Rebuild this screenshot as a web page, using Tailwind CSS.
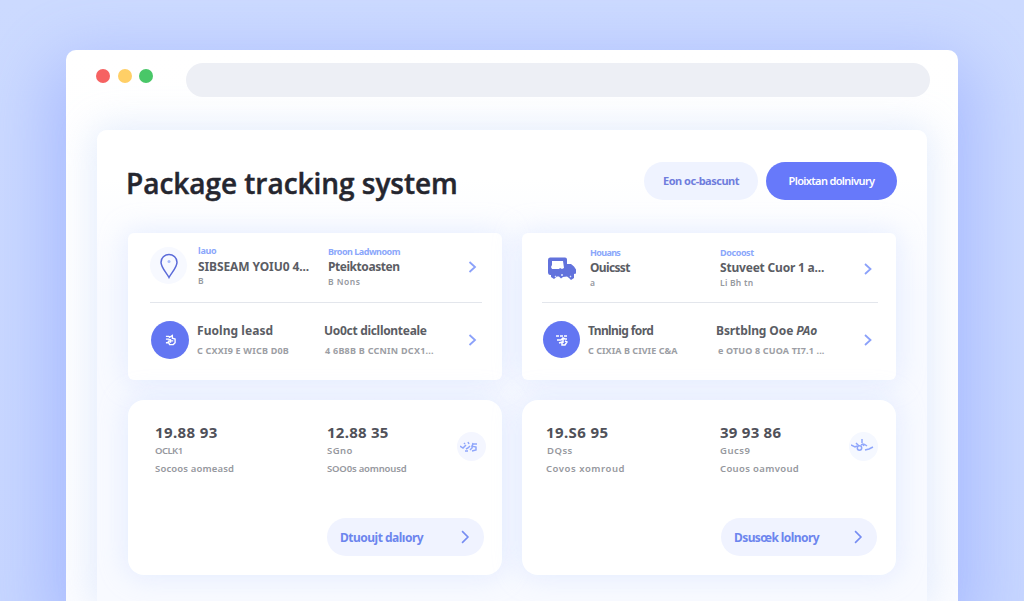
<!DOCTYPE html>
<html lang="en">
<head>
<meta charset="utf-8">
<title>Package tracking system</title>
<script src="https://cdn.jsdelivr.net/npm/@tailwindcss/browser@4"></script>
</head>
<body class="h-[601px] overflow-hidden bg-[#cbdaff] bg-linear-to-b from-[#cddbff] to-[#c8d7ff] px-[66px] pt-[50px] font-['Noto_Sans',sans-serif] whitespace-nowrap text-[#5b5d64]">
<main class="h-[551px] w-[892px] rounded-t-[10px] bg-linear-to-b from-white to-[#fbfcff] shadow-[0_24px_70px_16px_rgba(135,158,255,0.5)]">
  <header class="flex h-20 pt-[13px] pl-[30px]">
    <div class="flex h-[26px] w-[90px] items-center gap-[7.5px]">
      <span class="size-[14px] rounded-full bg-[#f66262]"></span>
      <span class="size-[14px] rounded-full bg-[#ffcf66]"></span>
      <span class="size-[14px] rounded-full bg-[#49c768]"></span>
    </div>
    <div class="h-[34px] w-[744px] rounded-full bg-[#edeff5]"></div>
  </header>
  <section class="ml-[31px] h-[471px] w-[830px] rounded-t-[10px] bg-linear-to-b from-white from-10% to-[#f8faff] to-35% pt-8 shadow-[0_0_36px_4px_rgba(190,212,248,0.42)]">
    <div class="flex h-[38px] items-center pl-[29px]">
      <h1 class="w-[518px] pt-[3px] font-['Open_Sans',sans-serif] text-[28px] leading-[38px] font-semibold tracking-[-0.03px] text-[#25262f] [-webkit-text-stroke:0.45px_#25262f]">Package tracking system</h1>
      <button class="h-[38px] w-[114px] rounded-full bg-[#eff3ff] text-[11px] font-bold tracking-[-0.5px] text-[#6f7ddd]">Eon oc-bascunt</button>
      <button class="ml-2 h-[38px] w-[131px] rounded-full bg-[#6779fa] text-[11px] font-semibold tracking-[-0.65px] text-white">Ploixtan dolnivury</button>
    </div>

    <div class="mt-[33px] ml-[31px] grid grid-cols-[374px_374px] gap-x-5 gap-y-5">
      <article class="h-[147px] rounded-md bg-white shadow-[0_0_26px_3px_rgba(200,216,255,0.38)]">
        <div class="ml-[22px] grid h-[70px] w-[332px] grid-cols-[48px_130px_1fr_20px] border-b-[1.5px] border-[#e3e6ec]">
          <span class="mt-[14px] flex size-[37px] items-center justify-center rounded-full bg-[#f7f9ff]">
            <svg class="h-[26px] w-5" viewBox="0 0 20 26" fill="none" stroke="#5b6bd9" stroke-width="1.500"><path d="M10 24.5C7.5 19.5 2 14.5 2 9.2a8 7.6 0 0 1 16 0c0 5.300-5.500 10.300-8 15.300Z"/><circle cx="10" cy="8.500" r="1.500" fill="#a9bcfb" stroke="none"/></svg>
          </span>
          <div class="pt-[10px]">
            <p class="text-[9px] leading-[15px] font-bold tracking-[-0.3px] text-[#8ba7fb]">lauo</p>
            <p class="pt-px text-[12px] leading-[15px] font-bold tracking-[-0.1px]">SIBSEAM YOIU0 4...</p>
            <p class="text-[8.500px] leading-[14px] font-semibold text-[#96999f]">B</p>
          </div>
          <div class="pt-[11px]">
            <p class="text-[9px] leading-[15px] font-bold tracking-[-0.5px] text-[#8ba7fb]">Broon Ladwnoom</p>
            <p class="text-[12px] leading-[15px] font-bold tracking-[-0.45px]">Pteiktoasten</p>
            <p class="text-[8.500px] leading-[15px] font-semibold tracking-[0.500px] text-[#96999f]">B Nons</p>
          </div>
          <svg class="mt-7 ml-1 size-3" viewBox="0 0 12 12" fill="none" stroke="#8ba1fa" stroke-width="1.800"><path d="m3.500 1 5.500 5-5.500 5"/></svg>
        </div>
        <div class="ml-[22px] grid h-[77px] w-[332px] grid-cols-[47px_127px_1fr_20px]">
          <span class="mt-[18px] ml-px flex size-[38px] items-center justify-center rounded-full bg-[#6376f2]">
            <svg class="h-3 w-[11px]" viewBox="0 0 12 12" fill="none" stroke="#fff" stroke-width="1.500"><path d="M1 2h3l1 1 3-2v3l3 1v4L9 11H5l-1-2H1M1 5h3l2 2h3M6 5v4M3 7l2 1"/></svg>
          </span>
          <div class="pt-[18px]">
            <p class="text-[12px] leading-5 font-bold tracking-[0.05px]">Fuolng leasd</p>
            <p class="text-[9px] leading-[20px] font-bold tracking-[0.2px] text-[#9c9ea4]">C CXXI9 E WICB D0B</p>
          </div>
          <div class="pt-[18px]">
            <p class="text-[12px] leading-5 font-bold tracking-[-0.3px]">Uo0ct dicllonteale</p>
            <p class="pl-px text-[9px] leading-[20px] font-bold tracking-[0.25px] text-[#9c9ea4]">4 6B8B B CCNIN DCX1...</p>
          </div>
          <svg class="mt-[31px] ml-1 size-3" viewBox="0 0 12 12" fill="none" stroke="#8ba1fa" stroke-width="1.800"><path d="m3.500 1 5.500 5-5.500 5"/></svg>
        </div>
      </article>

      <article class="h-[147px] rounded-md bg-white shadow-[0_0_26px_3px_rgba(200,216,255,0.38)]">
        <div class="ml-5 grid h-[70px] w-[336px] grid-cols-[48px_130px_1fr_20px] border-b-[1.5px] border-[#e3e6ec]">
          <svg class="mt-6 ml-[5px] h-6 w-[30px]" viewBox="0 0 30 24"><path d="M3 .5h15a2 2 0 0 1 2 2V7h4l3 2.500 2 3v4l-2 .5v4l-3 2-2-2-2-1.500-4 .5-2 1.500-2-2h-2l-3 2.500-3-2v-2H3a2.500 2.500 0 0 1-2-2.500V3A2.500 2.500 0 0 1 3 .5Z" fill="#6272dc"/><path d="M5 4h11l1 7-2 1-2-1-1 1H5l-1-2 1-2Z" fill="#fff"/><path d="m8 19 1 1m14-1 1 1M14 18l2 0" stroke="#dce4ff" stroke-width="1.300"/></svg>
          <div class="pt-[12px]">
            <p class="text-[9px] leading-[15px] font-bold tracking-[-0.65px] text-[#8ba7fb]">Houans</p>
            <p class="text-[12px] leading-[15px] font-bold tracking-[-0.650px]">Ouicsst</p>
            <p class="text-[8.500px] leading-[15px] font-semibold text-[#96999f]">a</p>
          </div>
          <div class="pt-[12px]">
            <p class="text-[9px] leading-[15px] font-bold tracking-[-0.4px] text-[#8ba7fb]">Docoost</p>
            <p class="text-[12px] leading-[15px] font-bold tracking-[-0.2px]">Stuveet Cuor 1 a...</p>
            <p class="text-[8.500px] leading-[15px] font-semibold tracking-[0.250px] text-[#96999f]">Li Bh tn</p>
          </div>
          <svg class="mt-[30px] ml-1 size-3" viewBox="0 0 12 12" fill="none" stroke="#8ba1fa" stroke-width="1.800"><path d="m3 1 5.500 5-5.500 5"/></svg>
        </div>
        <div class="ml-5 grid h-[77px] w-[336px] grid-cols-[46px_128px_1fr_20px]">
          <span class="mt-[18px] ml-px flex size-[37px] items-center justify-center rounded-full bg-[#6376f2]">
            <svg class="h-3 w-[12px]" viewBox="0 0 12 12" fill="none" stroke="#fff" stroke-width="1.500"><path d="M0 2h3m1 0h3m1 0h3M1 6h4l2-2 2 1h2M3 9l3-1v3h3l2-3-2-1M7 4v5"/></svg>
          </span>
          <div class="pt-[18px]">
            <p class="text-[12px] leading-5 font-bold tracking-[-0.6px]">Tnnlnig ford</p>
            <p class="text-[9px] leading-[20px] font-bold tracking-[0.050px] text-[#9c9ea4]">C CIXIA B CIVIE C&amp;A</p>
          </div>
          <div class="pt-[18px]">
            <p class="text-[12px] leading-5 font-bold tracking-[-0.1px]">Bsrtblng Ooe <i>PAo</i></p>
            <p class="pl-[2px] text-[9px] leading-[20px] font-bold tracking-[0.150px] text-[#9c9ea4]">e OTUO 8 CUOA TI7.1 ...</p>
          </div>
          <svg class="mt-[31px] ml-1 size-3" viewBox="0 0 12 12" fill="none" stroke="#8ba1fa" stroke-width="1.800"><path d="m3 1 5.500 5-5.500 5"/></svg>
        </div>
      </article>

      <article class="h-[175px] rounded-2xl bg-white pt-[23px] shadow-[0_0_26px_3px_rgba(200,216,255,0.38)]">
        <div class="ml-[27px] grid h-[95px] grid-cols-[172px_130px_29px]">
          <div class="text-[9.500px] leading-[18px] font-semibold text-[#96989e]">
            <p class="mb-px text-[15px] font-bold tracking-[0.4px] text-[#505159]">19.88 93</p><p class="tracking-[-0.55px]">OCLK1</p><p class="tracking-[0.150px]">Socoos aomeasd</p>
          </div>
          <div class="text-[9.500px] leading-[18px] font-semibold text-[#96989e]">
            <p class="mb-px text-[15px] font-bold tracking-[0.250px] text-[#505159]">12.88 35</p><p class="tracking-[0.4px]">SGno</p><p class="tracking-[-0.180px]">SOO0s aomnousd</p>
          </div>
          <span class="mt-[9px] flex size-[29px] items-center justify-center rounded-full bg-[#f4f6ff]">
            <svg class="mr-[5px] h-[14px] w-[18px] shrink-0" viewBox="0 0 18 14" fill="none" stroke="#8fa6fb" stroke-width="1.500"><path d="m0 6 3 2 3-3M6 9l2-1 2-2M8 2l1 2M5 11l3 0M17 4h-4l-1 2 4 1v3l-4 1M10 10l2-2 1-5M4 3l1 1"/></svg>
          </span>
        </div>
        <button class="mr-[18px] ml-auto flex h-[38px] w-[157px] items-center justify-between rounded-full bg-[#f0f3ff] px-[13px] text-[12px] font-bold tracking-[-0.5px] text-[#6c85ee]"><span class="pt-px">Dtuoujt dalıory</span>
          <svg class="-mr-px size-[14px]" viewBox="0 0 12 12" fill="none" stroke="#768cf2" stroke-width="1.400"><path d="m3.500 1 5 5-5 5"/></svg></button>
      </article>

      <article class="h-[175px] rounded-2xl bg-white pt-[23px] shadow-[0_0_26px_3px_rgba(200,216,255,0.38)]">
        <div class="ml-6 grid h-[95px] grid-cols-[174px_129px_29px]">
          <div class="text-[9.500px] leading-[18px] font-semibold text-[#96989e]">
            <p class="mb-px text-[15px] font-bold tracking-[0.4px] text-[#505159]">19.S6 95</p><p class="pl-px tracking-[0.5px]">DQss</p><p class="tracking-[0.550px]">Covos xomroud</p>
          </div>
          <div class="text-[9.500px] leading-[18px] font-semibold text-[#96989e]">
            <p class="mb-px text-[15px] font-bold tracking-[0.250px] text-[#505159]">39 93 86</p><p class="tracking-[0.5px]">Gucs9</p><p class="tracking-[0.350px]">Couos oamvoud</p>
          </div>
          <span class="mt-[9px] flex size-[29px] items-center justify-center rounded-full bg-[#f5f8ff]">
            <svg class="mr-[3px] mb-[3px] h-[14px] w-[23px] shrink-0" viewBox="0 0 23 14" fill="none" stroke="#8fa6fb" stroke-width="1.500"><path d="m0 7 4 2 2-1M5 5l3 3M11 1v4M13 6l3 2M14 12l4-1 4-2"/><circle cx="8.500" cy="10" r="2.200"/><path d="m10 7 2-1 1 2"/></svg>
          </span>
        </div>
        <button class="mr-[19px] ml-auto flex h-[38px] w-[156px] items-center justify-between rounded-full bg-[#f0f3ff] px-[13px] text-[12px] font-bold tracking-[-0.580px] text-[#6c85ee]"><span class="pt-px">Dsusœk lolnory</span>
          <svg class="-mr-px size-[14px]" viewBox="0 0 12 12" fill="none" stroke="#768cf2" stroke-width="1.400"><path d="m3.500 1 5 5-5 5"/></svg></button>
      </article>
    </div>
  </section>
</main>
</body>
</html>
